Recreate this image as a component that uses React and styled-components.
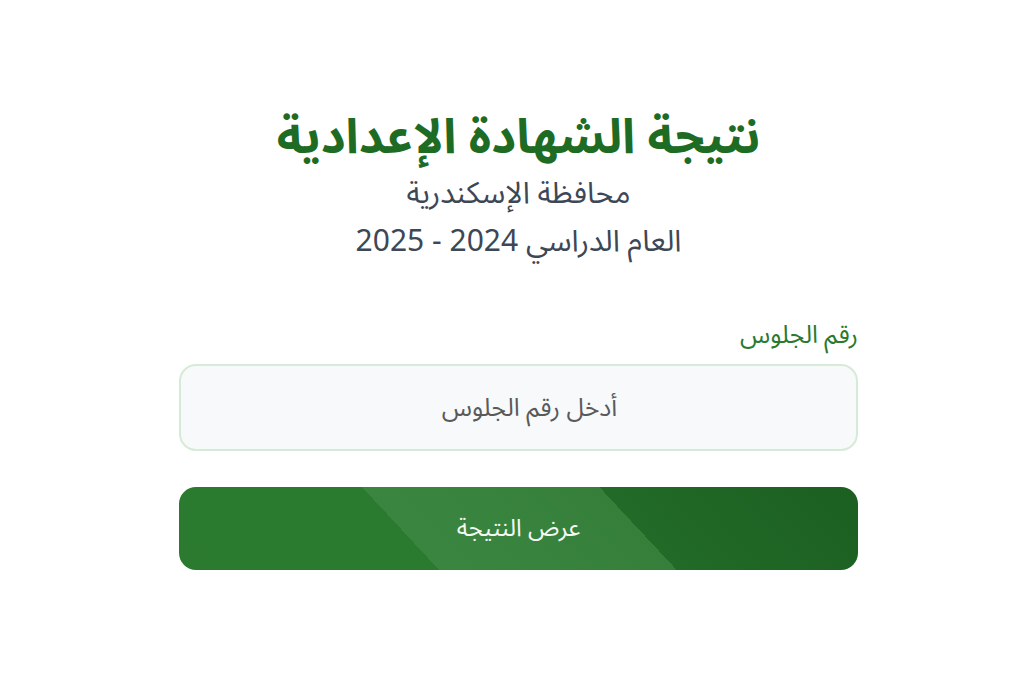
import React from "react";
import styled, { createGlobalStyle } from "styled-components";

const Global = createGlobalStyle`
  html, body { margin: 0; padding: 0; background: #ffffff; }
  body { font-family: "Noto Sans Arabic", "Noto Kufi Arabic", "DejaVu Sans", sans-serif; }
  * { box-sizing: border-box; }
`;

const Page = styled.div`
  width: 1024px;
  height: 674px;
  padding: 105px 0 0 13px;
  display: flex;
  justify-content: center;
  background: #fff;
`;

const Card = styled.main`
  width: 679px;
  display: flex;
  flex-direction: column;
  direction: rtl;
`;

const Header = styled.header`
  display: flex;
  flex-direction: column;
  align-items: center;
  text-align: center;
`;

const Title = styled.h1`
  margin: 0;
  font-size: 48px;
  line-height: 66px;
  font-weight: 700;
  color: #1e6b24;
`;

const Sub = styled.p`
  margin: ${(p) => p.$mt || 0}px 0 0;
  font-size: 30px;
  line-height: 44px;
  font-weight: 400;
  color: #3d4756;
`;

const Form = styled.form`
  margin-top: 54px;
  display: flex;
  flex-direction: column;
`;

const Label = styled.label`
  font-size: 25px;
  line-height: 34px;
  color: #2a7a2f;
  margin-bottom: 12px;
`;

const Input = styled.input`
  width: 100%;
  height: 87px;
  padding: 0 0 0 22px;
  border: 2px solid #d6ebd7;
  border-radius: 17px;
  background: #f7f9fa;
  text-align: center;
  font-family: inherit;
  font-size: 25px;
  color: #333;
  direction: rtl;
  outline: none;
  &::placeholder { color: #5a5a5a; }
`;

const Button = styled.button`
  margin-top: 36px;
  width: 100%;
  height: 83px;
  border: none;
  border-radius: 17px;
  font-family: inherit;
  font-size: 24px;
  color: #f4f8f4;
  cursor: pointer;
  background: linear-gradient(
    47deg,
    #2b7a30 0%,
    #2a7a30 34.4%,
    #3a8640 34.4%,
    #357f3b 65.8%,
    #216a27 65.8%,
    #1c5f21 100%
  );
`;

export default function App() {
  return (
    <>
      <Global />
      <Page>
        <Card>
          <Header>
            <Title>نتيجة الشهادة الإعدادية</Title>
            <Sub $mt={1}>محافظة الإسكندرية</Sub>
            <Sub $mt={4}>العام الدراسي 2024 - 2025</Sub>
          </Header>
          <Form onSubmit={(e) => e.preventDefault()}>
            <Label htmlFor="seat">رقم الجلوس</Label>
            <Input id="seat" placeholder="أدخل رقم الجلوس" />
            <Button type="submit">عرض النتيجة</Button>
          </Form>
        </Card>
      </Page>
    </>
  );
}
